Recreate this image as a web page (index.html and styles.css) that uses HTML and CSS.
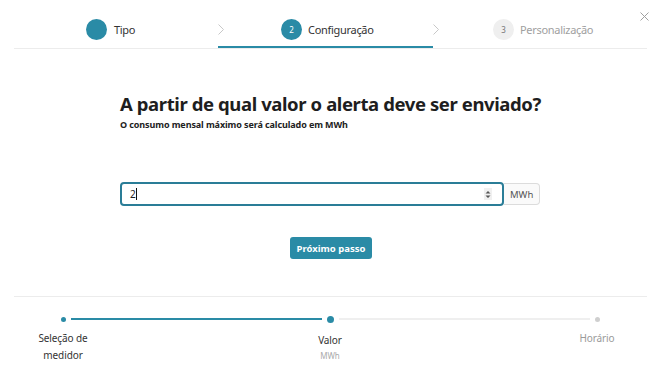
FILE: index.html
```html
<!DOCTYPE html>
<html lang="pt-BR">
<head>
    <meta charset="UTF-8">
    <meta name="viewport" content="width=device-width, initial-scale=1.0">
    <title>Novo alerta</title>
    <link rel="stylesheet" href="styles.css">
</head>
<body>

    <div class="modal">
        <button class="close" aria-label="Fechar">
            <svg width="9" height="9" viewBox="0 0 9 9"><path d="M0.5 0.5 L8.5 8.5 M8.5 0.5 L0.5 8.5" stroke="#a0a0a0" stroke-width="1"/></svg>
        </button>

        <div class="steps">
            <div class="step done">
                <span class="num"></span>
                <span class="label">Tipo</span>
            </div>
            <div class="step active">
                <span class="chev">
                    <svg width="6" height="11" viewBox="0 0 6 11"><path d="M0.5 0.5 L5.5 5.5 L0.5 10.5" fill="none" stroke="#c8c8c8" stroke-width="1"/></svg>
                </span>
                <span class="num">2</span>
                <span class="label">Configuração</span>
            </div>
            <div class="step todo">
                <span class="chev">
                    <svg width="6" height="11" viewBox="0 0 6 11"><path d="M0.5 0.5 L5.5 5.5 L0.5 10.5" fill="none" stroke="#c8c8c8" stroke-width="1"/></svg>
                </span>
                <span class="num">3</span>
                <span class="label">Personalização</span>
            </div>
        </div>

        <div class="content">
            <h2>A partir de qual valor o alerta deve ser enviado?</h2>
            <p class="hint">O consumo mensal máximo será calculado em MWh</p>

            <div class="field">
                <div class="input-box">
                    <span class="value">2</span><span class="caret"></span>
                    <span class="spin">
                        <svg width="6" height="9" viewBox="0 0 6 9"><path d="M0.5 3.5 L3 1 L5.5 3.5 Z M0.5 5.5 L3 8 L5.5 5.5 Z" fill="#555"/></svg>
                    </span>
                </div>
                <span class="unit">MWh</span>
            </div>

            <div class="actions">
                <button class="btn">Próximo passo</button>
            </div>
        </div>

        <div class="progress">
            <div class="track">
                <span class="dot small"></span>
                <span class="bar filled"></span>
                <span class="dot big"></span>
                <span class="bar"></span>
                <span class="dot small grey"></span>
            </div>
            <div class="marks">
                <div class="mark">Seleção de<br>medidor</div>
                <div class="mark current">Valor<small>MWh</small></div>
                <div class="mark later">Horário</div>
            </div>
        </div>
    </div>

</body>
</html>
```

FILE: styles.css
```css
body {
    margin: 0;
    font-family: "Noto Sans", "Open Sans", sans-serif;
    background: #fff;
    color: #222;
}
.modal {
    position: relative;
    width: 661px;
    height: 379px;
    padding: 0 14px;
    box-sizing: border-box;
}
.close {
    position: absolute;
    top: 12px;
    right: 12px;
    border: none;
    background: none;
    padding: 0;
    line-height: 0;
}

/* top stepper */
.steps {
    display: flex;
    height: 48px;
    border-bottom: 1px solid #ececec;
    padding-left: 72px;
}
.step {
    display: flex;
    align-items: center;
    font-size: 11px;
    letter-spacing: -0.3px;
    color: #333;
    padding-top: 10px;
    box-sizing: border-box;
}
.step.done {
    width: 132px;
}
.step.active {
    width: 215px;
    height: 48px;
    margin-bottom: -1px;
    border-bottom: 2px solid #2a8ba6;
    padding-top: 12px;
}
.step .num {
    width: 21px;
    height: 21px;
    flex: none;
    border-radius: 50%;
    display: flex;
    align-items: center;
    justify-content: center;
    font-size: 8px;
    letter-spacing: 0;
    color: #fff;
    background: #2a8ba6;
    margin-right: 6px;
}
.step.done .num {
    margin-right: 7px;
}
.chev {
    display: flex;
    align-items: center;
    width: 6px;
}
.step.active .chev {
    margin-right: 57px;
}
.step.todo .chev {
    margin-right: 54px;
}
.step.todo .num {
    background: #efefef;
    color: #777;
}
.step.todo .label {
    color: #a0a0a0;
}

/* question */
.content {
    padding: 42px 106px 0;
}
h2 {
    margin: 0;
    font-size: 18.5px;
    font-weight: 700;
    color: #1e1e1e;
    letter-spacing: -0.4px;
    white-space: nowrap;
}
.hint {
    margin: 2px 0 0;
    font-size: 9px;
    font-weight: 700;
    letter-spacing: -0.1px;
    color: #222;
}
.field {
    display: flex;
    align-items: center;
    margin-top: 51px;
}
.input-box {
    width: 384px;
    height: 24px;
    box-sizing: border-box;
    border: 2px solid #2a7d97;
    border-radius: 4px;
    display: flex;
    align-items: center;
    padding: 0 6px 0 8px;
    font-size: 10px;
}
.caret {
    width: 1px;
    height: 12px;
    background: #111;
}
.spin {
    margin-left: auto;
    width: 8px;
    height: 12px;
    background: #f0f0f0;
    display: flex;
    align-items: center;
    justify-content: center;
    margin-right: 4px;
}
.unit {
    height: 22px;
    box-sizing: border-box;
    border: 1px solid #dcdcdc;
    border-left: none;
    border-radius: 0 4px 4px 0;
    padding: 0 6px;
    display: flex;
    align-items: center;
    font-size: 9.5px;
    color: #555;
    background: #fafafa;
}
.actions {
    display: flex;
    justify-content: center;
    margin-top: 31px;
}
.btn {
    border: none;
    background: #2a8ba6;
    color: #fff;
    font-family: inherit;
    font-size: 9.5px;
    font-weight: 700;
    width: 82px;
    height: 22px;
    border-radius: 3px;
    margin-left: 1px;
}

/* bottom progress */
.progress {
    margin-top: 37px;
    border-top: 1px solid #ececec;
    padding: 18px 47px 0 47px;
}
.track {
    display: flex;
    align-items: center;
    height: 8px;
}
.dot {
    border-radius: 50%;
    background: #2a8ba6;
    flex: none;
}
.dot.small {
    width: 5px;
    height: 5px;
}
.dot.big {
    width: 7px;
    height: 7px;
}
.dot.grey {
    background: #cfcfcf;
}
.bar {
    flex: 1;
    height: 2px;
    background: #efefef;
    margin: 0 5px;
}
.bar.filled {
    background: #2a8ba6;
    height: 2.5px;
}
.marks {
    display: flex;
    justify-content: space-between;
    margin: 7px -30px 0 -31px;
}
.mark {
    width: 66px;
    text-align: center;
    font-size: 10px;
    line-height: 17px;
    letter-spacing: -0.1px;
    color: #333;
}
.mark.current {
    padding-top: 2px;
}
.mark small {
    display: block;
    font-size: 8px;
    line-height: 14px;
    color: #aaa;
}
.mark.later {
    color: #9a9a9a;
}
```
